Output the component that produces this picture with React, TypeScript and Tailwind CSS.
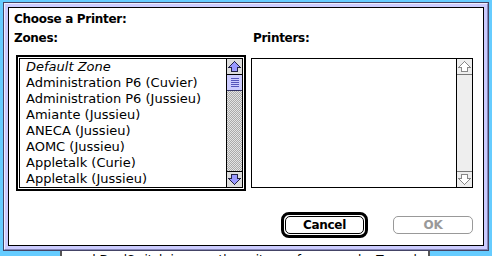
import React from "react";

function Arrow({ dir, fill, stroke }: { dir: "up" | "down"; fill: string; stroke: string }) {
  const pts = "7.5,2.5 13.5,8.5 10.5,8.5 10.5,12.5 4.5,12.5 4.5,8.5 1.5,8.5";
  return (
    <svg width="15" height="15" viewBox="0 0 15 15" className="block" style={{ transform: dir === "down" ? "rotate(180deg)" : undefined }}>
      <polygon points={pts} fill={fill} stroke={stroke} strokeWidth="1" shapeRendering="crispEdges" />
    </svg>
  );
}

const zones = [
  "Administration P6 (Cuvier)",
  "Administration P6 (Jussieu)",
  "Amiante (Jussieu)",
  "ANECA (Jussieu)",
  "AOMC (Jussieu)",
  "Appletalk (Curie)",
  "Appletalk (Jussieu)",
];

export default function App() {
  return (
    <div className="relative w-[492px] h-[256px] overflow-hidden bg-[#66ccff] font-['DejaVu_Sans',sans-serif] text-black">
      {/* window behind the dialog */}
      <div className="absolute left-[60px] top-[240px] w-[370px] h-[30px] bg-white border-x-2 border-[#555555] overflow-hidden">
        <div className="pl-[14px] pt-[12px] text-[12px] leading-[16px] whitespace-nowrap">
          ard DualSwitch ignores these items, for example. To exclude single files or folders
        </div>
      </div>

      {/* dialog */}
      <div className="absolute left-[3px] top-[2px] w-[486px] h-[249px] border border-[#444466] flex">
        <div className="flex-1 flex bg-[#ccccff] border border-t-[#eeeeff] border-l-[#eeeeff] border-b-[#8888bb] border-r-[#8888bb] p-[3px]">
          <div className="flex-1 bg-white border border-black pt-[3px] pl-[7px] flex flex-col">
            <div className="-ml-[2px] h-[16px] leading-[16px] text-[12px] font-bold tracking-[-0.3px]">Choose a Printer:</div>
            <div className="mt-[3px] flex">
              {/* Zones column */}
              <div className="w-[230px] flex flex-col">
                <div className="-ml-[2px] h-[16px] leading-[16px] text-[12px] font-bold tracking-[-0.3px]">Zones:</div>
                <div className="mt-[9px] w-[230px] h-[136px] border-2 border-black p-[1px] bg-white">
                  <div className="h-full border border-black flex">
                    <div className="flex-1 pl-[6px] text-[13px]">
                      <div className="h-[16px] leading-[16px] italic whitespace-nowrap">Default Zone</div>
                      {zones.map((z) => (
                        <div key={z} className="h-[16px] leading-[16px] whitespace-nowrap">{z}</div>
                      ))}
                    </div>
                    <div className="w-[16px] border-l border-black flex flex-col">
                      <div className="h-[16px] border-b border-black bg-[#dddddd] flex items-center justify-center">
                        <Arrow dir="up" fill="#9999ff" stroke="#222244" />
                      </div>
                      <div className="h-[16px] border-b border-[#333366] bg-[#ccccff] flex flex-col items-center justify-center gap-[1px]">
                        <div className="w-[8px] h-[1px] bg-[#5555bb]" />
                        <div className="w-[8px] h-[1px] bg-[#5555bb]" />
                        <div className="w-[8px] h-[1px] bg-[#5555bb]" />
                        <div className="w-[8px] h-[1px] bg-[#5555bb]" />
                        <div className="w-[8px] h-[1px] bg-[#5555bb]" />
                      </div>
                      <div className="flex-1 bg-[repeating-conic-gradient(#aaaaaa_0_25%,#e4e4e4_0_50%)] bg-[length:2px_2px]" />
                      <div className="h-[16px] border-t border-black bg-[#dddddd] flex items-center justify-center">
                        <Arrow dir="down" fill="#9999ff" stroke="#222244" />
                      </div>
                    </div>
                  </div>
                </div>
              </div>
              {/* Printers column */}
              <div className="ml-[5px] w-[222px] flex flex-col">
                <div className="ml-[2px] h-[16px] leading-[16px] text-[12px] font-bold tracking-[-0.3px]">Printers:</div>
                <div className="mt-[12px] w-[222px] h-[130px] border border-black flex bg-white">
                  <div className="flex-1" />
                  <div className="w-[16px] border-l border-black bg-[#eeeeee] flex flex-col">
                    <div className="h-[16px] border-b border-[#777777] flex items-center justify-center">
                      <Arrow dir="up" fill="#ffffff" stroke="#888888" />
                    </div>
                    <div className="flex-1" />
                    <div className="h-[16px] border-t border-[#777777] flex items-center justify-center">
                      <Arrow dir="down" fill="#ffffff" stroke="#888888" />
                    </div>
                  </div>
                </div>
              </div>
            </div>
            {/* Buttons */}
            <div className="mt-[21px] h-[26px] flex justify-end items-center pr-[10px] gap-[25px]">
              <div className="w-[87px] h-[26px] border-[3px] border-black rounded-[8px] p-[1px]">
                <div className="h-full border border-black rounded-[5px] flex items-center justify-center text-[12px] font-bold tracking-[-0.3px] leading-none">
                  Cancel
                </div>
              </div>
              <div className="w-[80px] h-[18px] border border-[#999999] rounded-[5px] flex items-center justify-center text-[12px] font-bold text-[#999999] tracking-[-0.3px] leading-none">
                OK
              </div>
            </div>
          </div>
        </div>
      </div>
    </div>
  );
}
